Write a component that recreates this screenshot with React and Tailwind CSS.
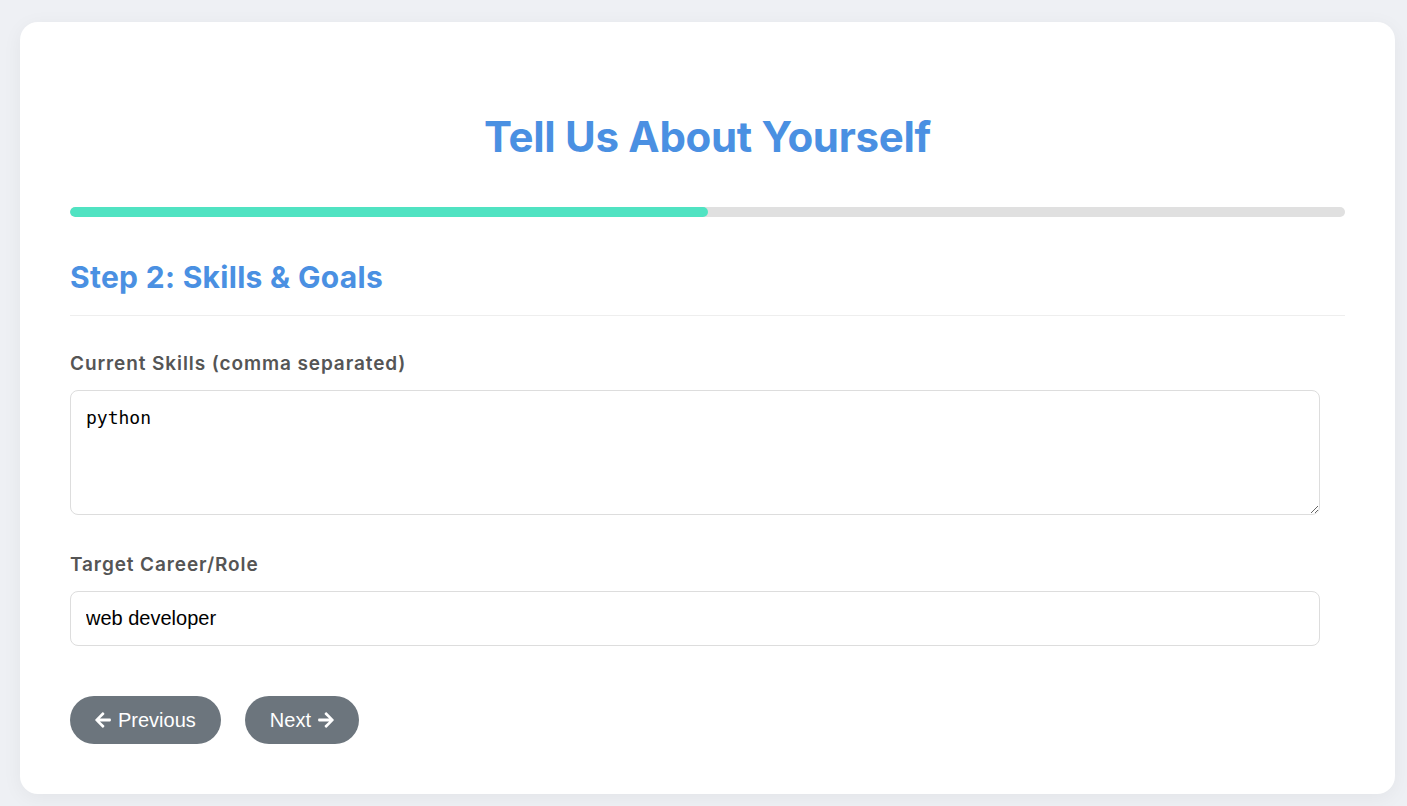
import React from "react";
import { FaArrowLeft, FaArrowRight } from "react-icons/fa";

const App = () => {
  return (
    <div className="min-h-screen bg-[#eef0f4] pt-[22px] pl-[20px] pr-[12px] pb-[12px]">
      <div className="bg-white rounded-[18px] shadow-[0_4px_20px_rgba(0,0,0,0.05)] p-[50px] font-['Inter','Noto_Sans',sans-serif]">
        {/* Title */}
        <h1 className="mt-[40px] text-center text-[42px] leading-[50px] font-bold tracking-[-0.3px] text-[#4a90e2]">
          Tell Us About Yourself
        </h1>

        {/* Progress */}
        <div className="mt-[45px] h-[10px] w-full rounded-full bg-[#e0e0e0] overflow-hidden">
          <div className="h-full w-1/2 rounded-full bg-[#50e3c2]" />
        </div>

        {/* Step heading */}
        <h2 className="mt-[43px] pb-[20px] border-b border-[#eeeeee] text-[30px] leading-[35px] font-bold tracking-[0.3px] text-[#4a90e2]">
          Step 2: Skills &amp; Goals
        </h2>

        {/* Skills */}
        <label className="block mt-[34px] text-[19px] leading-[27px] font-semibold tracking-[0.9px] text-[#555555]">
          Current Skills (comma separated)
        </label>
        <textarea
          defaultValue="python"
          className="block mt-[13px] w-[98%] h-[125px] border border-[#dddddd] rounded-[8px] px-[15px] pt-[13px] pb-[15px] text-[18px] text-black outline-none font-['DejaVu_Sans_Mono',monospace]"
        />

        {/* Target */}
        <label className="block mt-[36px] text-[19px] leading-[27px] font-semibold tracking-[0.9px] text-[#555555]">
          Target Career/Role
        </label>
        <input
          type="text"
          defaultValue="web developer"
          className="block mt-[13px] w-[98%] h-[55px] border border-[#dddddd] rounded-[8px] px-[15px] text-[20px] text-black outline-none font-['Liberation_Sans',Arial,sans-serif]"
        />

        {/* Buttons */}
        <div className="mt-[50px] flex gap-[24px] font-['Liberation_Sans',Arial,sans-serif]">
          <button className="h-[48px] pl-[24px] pr-[25px] rounded-full bg-[#6c757d] text-white text-[20px] flex items-center gap-[6px]">
            <FaArrowLeft className="w-[18px] h-[18px]" />
            Previous
          </button>
          <button className="h-[48px] pl-[25px] pr-[24px] rounded-full bg-[#6c757d] text-white text-[20px] flex items-center gap-[6px]">
            Next
            <FaArrowRight className="w-[18px] h-[18px]" />
          </button>
        </div>
      </div>
    </div>
  );
};

export default App;
